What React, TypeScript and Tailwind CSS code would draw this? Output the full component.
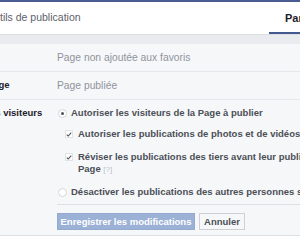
import React from "react"

const font = { fontFamily: '"Liberation Sans", Arial, sans-serif' }

function Radio({ checked }: { checked?: boolean }) {
  return (
    <span className="w-[9px] h-[9px] rounded-full border border-[#d4d7dc] bg-white flex items-center justify-center shrink-0">
      {checked && <span className="w-[3px] h-[3px] rounded-full bg-[#4b4f56]" />}
    </span>
  )
}

function Check() {
  return (
    <span className="w-[8px] h-[8px] border border-[#e1e3e6] bg-white flex items-center justify-center shrink-0">
      <svg width="8" height="7" viewBox="0 0 8 7" fill="none">
        <path d="M1 3.8 L3 5.6 L7 1" stroke="#4b4f56" strokeWidth="1.4" />
      </svg>
    </span>
  )
}

export default function App() {
  return (
    <div className="w-[300px] h-[240px] overflow-hidden bg-white whitespace-nowrap" style={font}>
      <div className="h-[2px] bg-[#4b5c92]" />
      <div className="h-[32px] flex bg-white">
        <div className="w-[283px] ml-[-14px] shrink-0 flex items-center text-[10.5px] text-[#5d6169]">
          Outils de publication
        </div>
        <div className="shrink-0 pl-[16px] pr-[16px] flex items-center border-b-2 border-[#43598f] text-[11px] font-bold text-[#1d2129] pt-[2px]">
          Paramètres
        </div>
      </div>
      <div className="h-[10px] bg-[#e9ebee] border-t border-[#dcdee3]" />

      <div className="bg-[#f6f7f9] border-b border-[#dddfe2]">
        <div className="h-[28px] flex items-center border-b border-[#e5e6e9]">
          <div className="w-[132px] ml-[-75px] shrink-0 text-[9.5px] font-bold text-[#1d2129]">Favoris</div>
          <div className="text-[10.3px] text-[#90949c]">Page non ajoutée aux favoris</div>
        </div>
        <div className="h-[28px] flex items-center border-b border-[#e5e6e9]">
          <div className="w-[136px] ml-[-79px] shrink-0 text-[9.5px] font-bold text-[#1d2129]">Visibilité de la Page</div>
          <div className="text-[10.3px] text-[#90949c]">Page publiée</div>
        </div>
        <div className="flex pb-[5px]">
          <div className="w-[132px] ml-[-75px] shrink-0 pt-[7px] text-[9.5px] leading-[12px] font-bold text-[#1d2129]">
            Publications des visiteurs
          </div>
          <div className="flex-1 pt-[7px] text-[9.5px] leading-[12px] font-bold text-[#4b4f56]">
            <div className="flex items-center gap-[4px] ml-[1px]">
              <Radio checked />
              <span>Autoriser les visiteurs de la Page à publier</span>
            </div>
            <div className="flex items-center gap-[5px] mt-[9px] ml-[8px]">
              <Check />
              <span>Autoriser les publications de photos et de vidéos</span>
            </div>
            <div className="flex items-start gap-[5px] mt-[11px] ml-[8px]">
              <span className="mt-[2px]"><Check /></span>
              <span>
                Réviser les publications des tiers avant leur publication sur la
                <br />
                Page <span className="font-normal text-[8px] text-[#bec2c9]">[?]</span>
              </span>
            </div>
            <div className="flex items-center gap-[4px] mt-[10px] ml-[1px]">
              <Radio />
              <span>Désactiver les publications des autres personnes sur la Page</span>
            </div>
            <div className="mt-[6px] border-t border-[#dddfe2]" />
            <div className="flex gap-[4px] mt-[8px]">
              <button className="w-[138px] h-[17px] bg-[#9cb1d6] border border-[#94a9d0] text-white text-[9.5px] font-bold leading-none">
                Enregistrer les modifications
              </button>
              <button className="w-[46px] h-[17px] bg-[#f6f7f9] border border-[#ced0d4] text-[#4b4f56] text-[9.5px] font-bold leading-none">
                Annuler
              </button>
            </div>
          </div>
        </div>
      </div>
    </div>
  )
}
